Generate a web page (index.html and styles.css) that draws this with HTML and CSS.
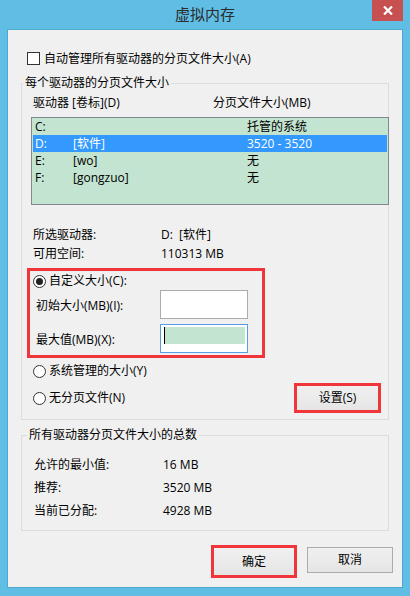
FILE: index.html
```html
<!DOCTYPE html>
<html lang="zh-CN">
<head>
<meta charset="utf-8">
<title>虚拟内存</title>
<link rel="stylesheet" href="styles.css">
</head>
<body>
<div class="window">
  <div class="titlebar">
    <span></span>
    <div class="title">虚拟内存</div>
    <div class="close">
      <svg width="10" height="9" viewBox="0 0 10 9"><path d="M1 0.5 L9 8.5 M9 0.5 L1 8.5" stroke="#fff" stroke-width="2.2" fill="none"/></svg>
    </div>
  </div>
  <div class="client">
    <div class="check-row"><span class="checkbox"></span><span>自动管理所有驱动器的分页文件大小(A)</span></div>

    <fieldset class="group g1">
      <legend>每个驱动器的分页文件大小</legend>
      <div class="gb-body g1-body">
        <div class="col-head"><span class="h1">驱动器 [卷标](D)</span><span>分页文件大小(MB)</span></div>
        <div class="listbox">
          <div class="lrow"><span class="c1">C:</span><span class="c2"></span><span>托管的系统</span></div>
          <div class="lrow sel"><span class="c1">D:</span><span class="c2">[软件]</span><span>3520 - 3520</span></div>
          <div class="lrow"><span class="c1">E:</span><span class="c2">[wo]</span><span>无</span></div>
          <div class="lrow"><span class="c1">F:</span><span class="c2">[gongzuo]</span><span>无</span></div>
        </div>
        <div class="info">
          <div class="irow"><span class="ilabel">所选驱动器:</span><span>D:&nbsp;&nbsp;[软件]</span></div>
          <div class="irow"><span class="ilabel">可用空间:</span><span>110313 MB</span></div>
        </div>
        <div class="mark custom">
          <div class="radio-row first"><span class="radio on"></span><span>自定义大小(C):</span></div>
          <div class="in-row r1"><span class="in-label">初始大小(MB)(I):</span><span class="textbox"></span></div>
          <div class="in-row r2"><span class="in-label">最大值(MB)(X):</span><span class="textbox focus"><span class="caret"></span><span class="selbar"></span></span></div>
        </div>
        <div class="radio-row out"><span class="radio"></span><span>系统管理的大小(Y)</span></div>
        <div class="radio-row out last"><span class="radio"></span><span>无分页文件(N)</span>
          <div class="mark set-mark"><div class="btn inner">设置(S)</div></div>
        </div>
      </div>
    </fieldset>

    <fieldset class="group g2">
      <legend>所有驱动器分页文件大小的总数</legend>
      <div class="gb-body g2-body">
        <div class="trow"><span class="tlabel">允许的最小值:</span><span>16 MB</span></div>
        <div class="trow"><span class="tlabel">推荐:</span><span>3520 MB</span></div>
        <div class="trow"><span class="tlabel">当前已分配:</span><span>4928 MB</span></div>
      </div>
    </fieldset>

    <div class="btn-row">
      <div class="mark ok-mark"><div class="btn inner">确定</div></div>
      <div class="btn cancel">取消</div>
    </div>
  </div>
</div>
</body>
</html>
```

FILE: styles.css
```css
* { box-sizing: border-box; }
html, body { margin: 0; padding: 0; }
body {
  background: #60bee4;
  font-family: "Open Sans", "Noto Sans CJK SC", "Microsoft YaHei", sans-serif;
  font-size: 12px;
  color: #000;
}
.window {
  width: 410px;
  height: 596px;
  background: #60bee4;
  overflow: hidden;
}
.titlebar {
  height: 29px;
  display: grid;
  grid-template-columns: 1fr auto 1fr;
  align-items: start;
}
.title {
  font-size: 15px;
  line-height: 29px;
  color: #2b2b2b;
}
.close {
  justify-self: end;
  margin-right: 7px;
  width: 31px;
  height: 21px;
  background: #c75050;
  display: flex;
  align-items: center;
  justify-content: center;
}
.client {
  margin-left: 7px;
  width: 396px;
  height: 559px;
  background: #f0f0f0;
  border: 1px solid #4ea8cf;
  padding-top: 20px;
}
.check-row {
  height: 17px;
  line-height: 17px;
  display: flex;
  align-items: center;
  padding-left: 19px;
}
.checkbox {
  width: 13px;
  height: 13px;
  border: 1px solid #333;
  background: #fff;
  margin-right: 4px;
  flex: none;
}
.group {
  margin: 8px 0 0 13px;
  width: 368px;
  border: 1px solid #dcdcdc;
  padding: 0;
  min-width: 0;
}
.group legend {
  padding: 0 2px;
  margin-left: 1px;
  line-height: 16px;
  height: 16px;
}
.g1-body { padding: 4px 0 6px 9px; }
.col-head {
  height: 16px;
  line-height: 16px;
  padding-left: 2px;
  display: flex;
}
.col-head .h1 { width: 180px; }
.listbox {
  margin-top: 6px;
  margin-right: -1px;
  height: 88px;
  border: 1px solid #828790;
  background: #c3e4d0;
}
.lrow {
  height: 17px;
  line-height: 17px;
  margin: 0 1px;
  padding-left: 2px;
  display: flex;
}
.lrow.sel { background: #3399ff; color: #fff; }
.lrow .c1 { width: 38px; }
.lrow .c2 { width: 174px; }
.info { margin-top: 20px; padding-left: 2px; }
.irow { height: 19px; line-height: 19px; display: flex; }
.ilabel { width: 128px; }
.mark { border: 3px solid #f0363a; }
.custom {
  margin-top: 5px;
  margin-left: -4px;
  width: 238px;
  padding: 2px 0 2px 0;
}
.radio-row {
  height: 16px;
  display: flex;
  align-items: center;
  line-height: 16px;
}
.radio-row.first { padding-left: 3px; }
.radio {
  width: 13px;
  height: 13px;
  border-radius: 50%;
  border: 1px solid #333;
  background: #fff;
  margin-right: 3px;
  flex: none;
  display: flex;
  align-items: center;
  justify-content: center;
}
.radio.on::after {
  content: "";
  width: 7px;
  height: 7px;
  border-radius: 50%;
  background: #222;
}
.in-row {
  display: flex;
  align-items: center;
  padding-left: 6px;
  height: 29px;
}
.in-row.r1 { margin-top: 1px; }
.in-row.r2 { margin-top: 5px; }
.in-label { width: 124px; }
.textbox {
  width: 88px;
  height: 29px;
  background: #fff;
  border: 1px solid #ababab;
  display: flex;
  padding: 2px 2px 8px 3px;
}
.textbox.focus { border-color: #569de5; }
.caret { width: 1px; background: #000; flex: none; }
.selbar { flex: 1; background: #c3e4d0; }
.radio-row.out { padding-left: 2px; margin-top: 5px; }
.radio-row.last { height: 30px; margin-top: 4px; }
.set-mark {
  margin-left: auto;
  margin-right: 7px;
  width: 87px;
  height: 30px;
}
.btn {
  background: linear-gradient(#f0f0f0, #e5e5e5);
  border: 1px solid #acacac;
  display: flex;
  align-items: center;
  justify-content: center;
  line-height: 16px;
}
.btn.inner { border: none; width: 100%; height: 100%; }
.g2 { margin-top: 7px; }
.g2 legend { margin-left: 5px; }
.g2-body { padding: 10px 0 8px 12px; }
.trow { height: 23px; line-height: 23px; display: flex; }
.tlabel { width: 129px; }
.btn-row {
  margin-top: 14px;
  display: flex;
  justify-content: flex-end;
  align-items: flex-start;
  gap: 10px;
  padding-right: 9px;
}
.ok-mark { width: 86px; height: 33px; }
.cancel { width: 86px; height: 26px; margin-top: 2px; }
```
